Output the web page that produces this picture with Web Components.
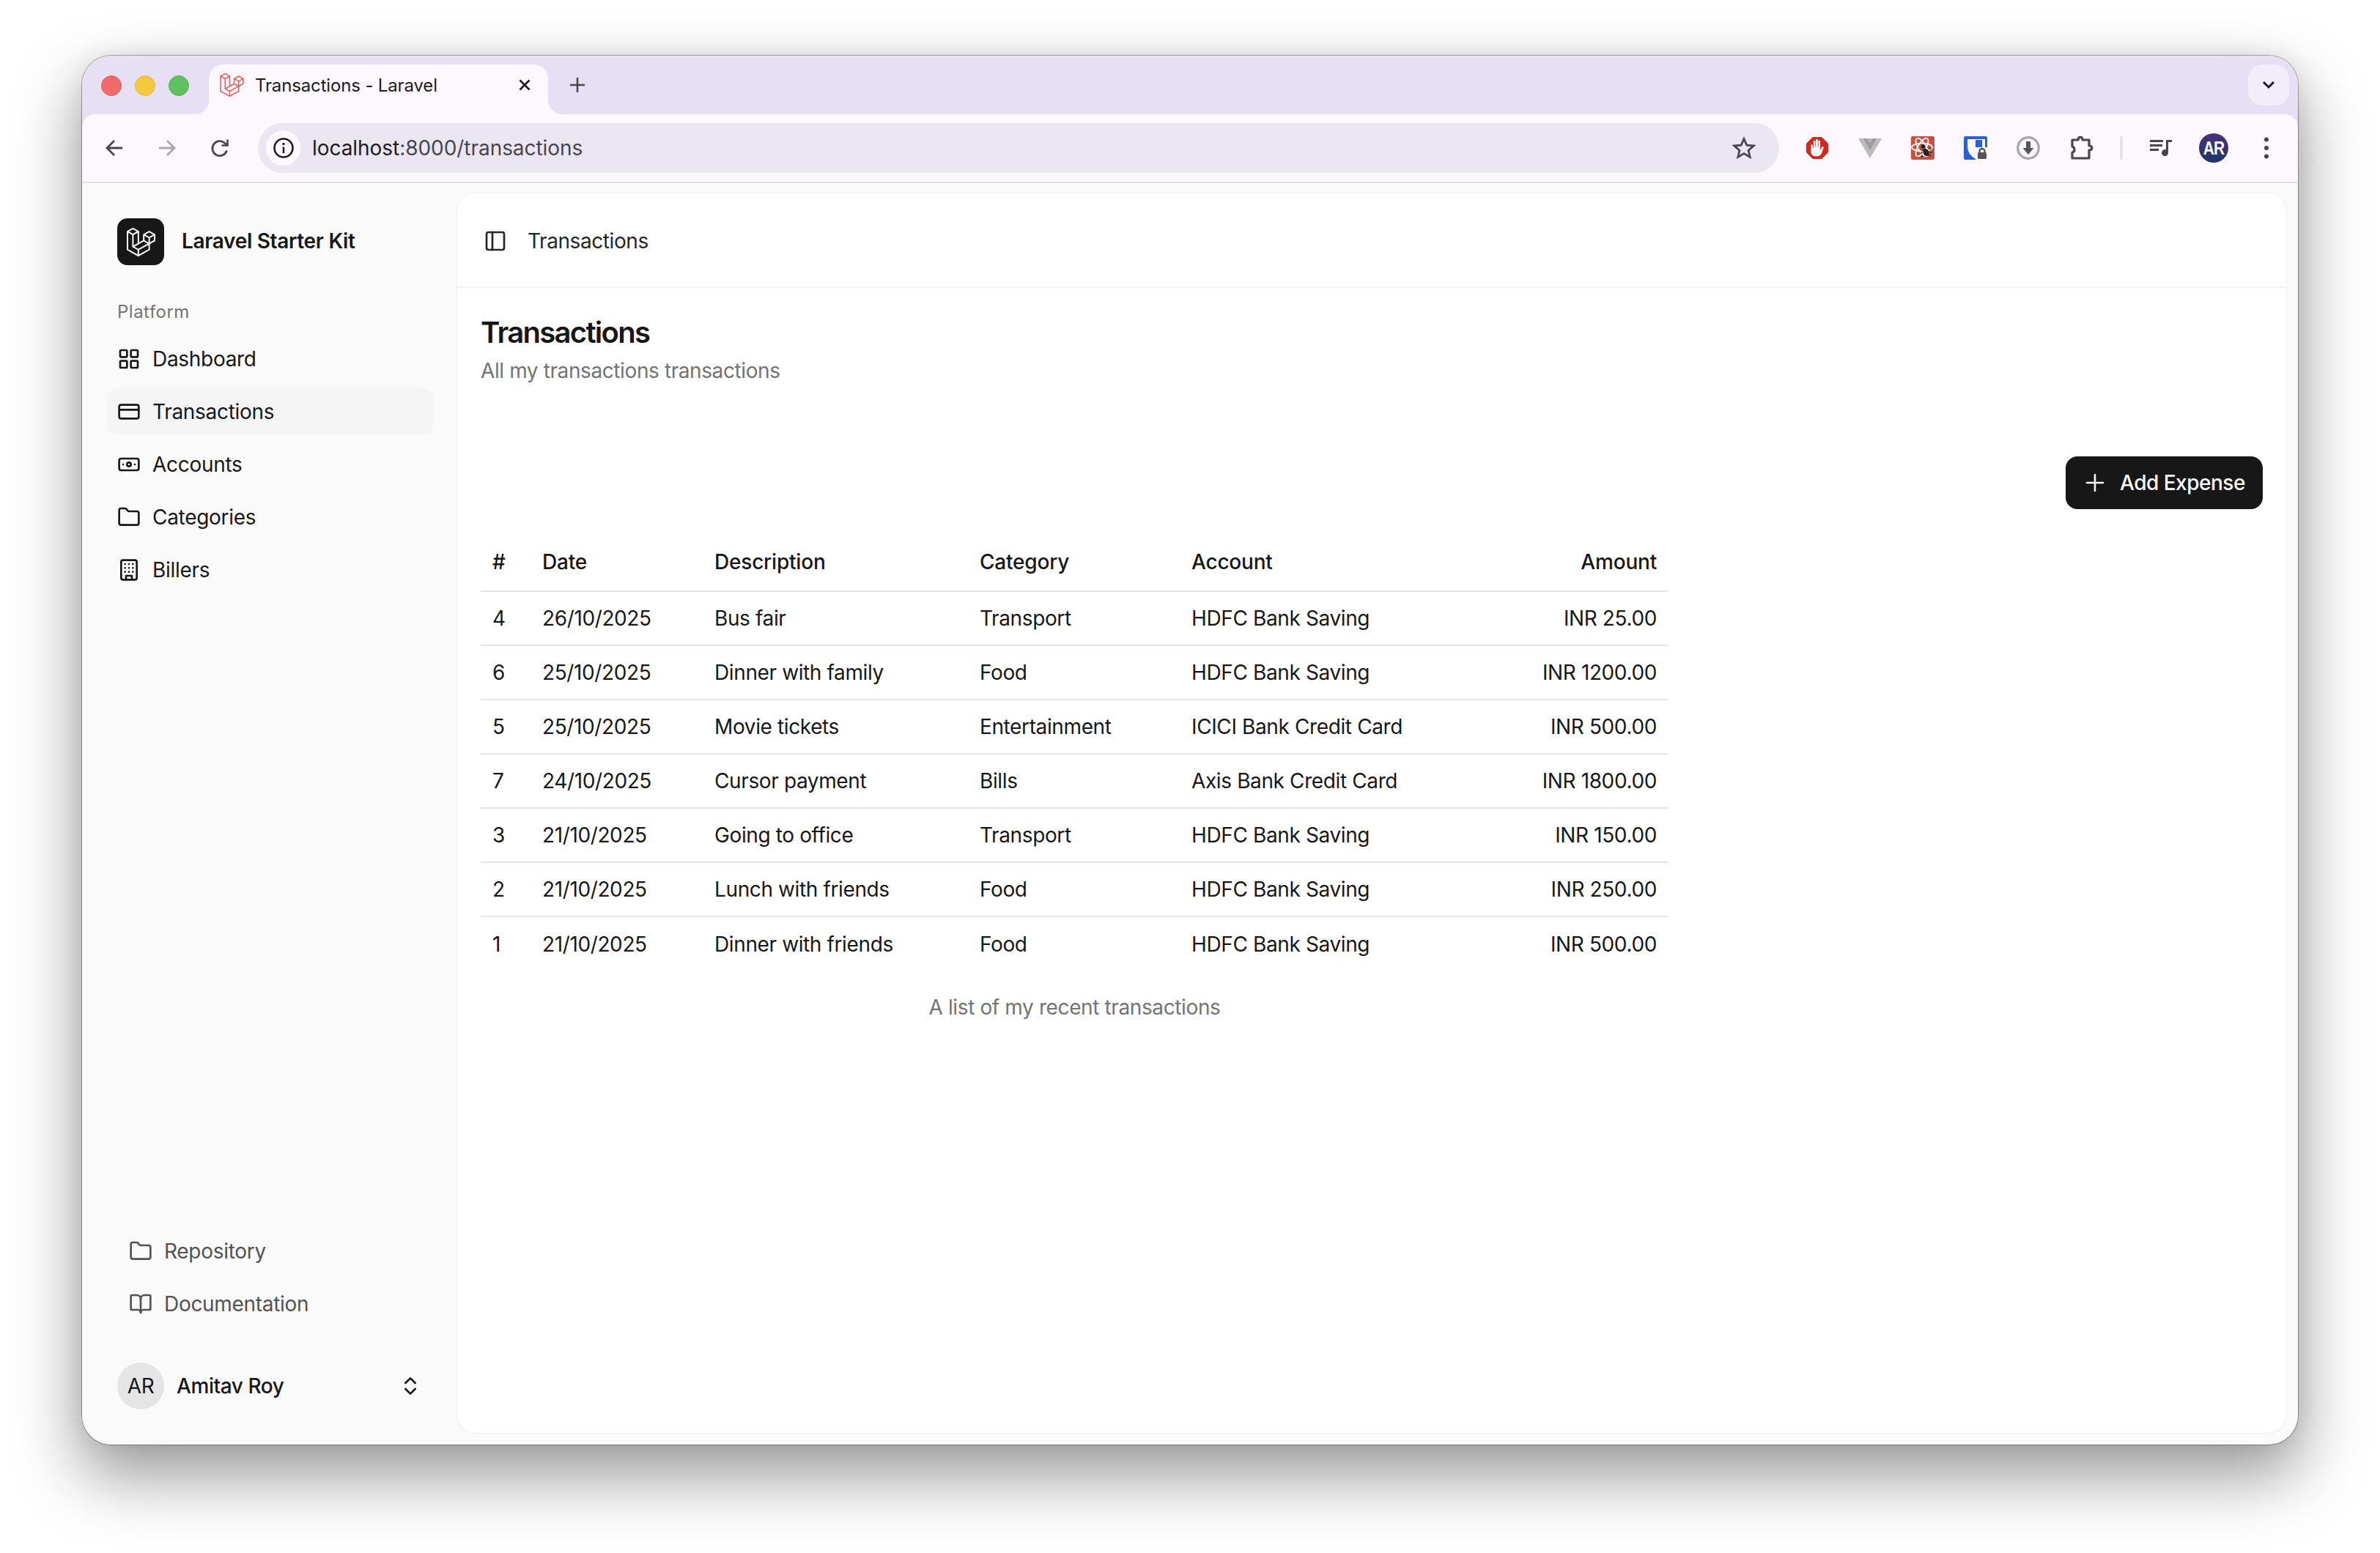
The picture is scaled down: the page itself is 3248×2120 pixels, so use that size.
<!doctype html>
<html lang="en"><head><meta charset="utf-8"><title>Transactions - Laravel</title>
<style>
html,body{margin:0;height:100%;background:#fff}
body{font-family:Inter,"Noto Sans",sans-serif;color:#171717}
</style></head>
<body>
<app-window>
  <tab-strip slot="strip"></tab-strip>
  <browser-toolbar slot="toolbar"></browser-toolbar>
  <app-sidebar slot="sidebar">
    <nav-item icon="grid" slot="nav">Dashboard</nav-item>
    <nav-item icon="card" active slot="nav">Transactions</nav-item>
    <nav-item icon="note" slot="nav">Accounts</nav-item>
    <nav-item icon="folder" slot="nav">Categories</nav-item>
    <nav-item icon="building" slot="nav">Billers</nav-item>
    <nav-item icon="folder" muted slot="foot">Repository</nav-item>
    <nav-item icon="book" muted slot="foot">Documentation</nav-item>
  </app-sidebar>
  <main-card slot="main">
    <tx-table></tx-table>
  </main-card>
</app-window>
<script>
const LOGO='M17.2 5.633 8.6.855 0 5.633v26.51l16.2 9 16.2-9v-8.442l7.6-4.223V9.856l-8.6-4.777-8.6 4.777V18.3l-5.6 3.111V5.633ZM38 18.301l-5.6 3.11v-6.157l5.6-3.11V18.3Zm-1.06-7.856-5.54 3.078-5.54-3.079 5.54-3.078 5.54 3.079ZM24.8 18.3v-6.157l5.6 3.111v6.158L24.8 18.3Zm-1 1.732 5.54 3.078-13.14 7.302-5.54-3.078 13.14-7.3v-.002Zm-16.2 7.89 7.6 4.222V38.3L2 30.966V7.92l5.6 3.111v16.892ZM8.6 9.3 3.06 6.222 8.6 3.143l5.54 3.08L8.6 9.3Zm21.8 15.51-13.2 7.334V38.3l13.2-7.334v-6.156ZM9.6 11.034l5.6-3.11v14.6l-5.6 3.11v-14.6Z';
const ICONS={
 grid:'<rect width="7" height="7" x="3" y="3" rx="1"/><rect width="7" height="7" x="14" y="3" rx="1"/><rect width="7" height="7" x="14" y="14" rx="1"/><rect width="7" height="7" x="3" y="14" rx="1"/>',
 card:'<rect width="20" height="14" x="2" y="5" rx="2"/><line x1="2" x2="22" y1="10" y2="10"/>',
 note:'<rect width="20" height="12" x="2" y="6" rx="2"/><circle cx="12" cy="12" r="2"/><path d="M6 12h.01M18 12h.01"/>',
 folder:'<path d="M20 20a2 2 0 0 0 2-2V8a2 2 0 0 0-2-2h-7.9a2 2 0 0 1-1.69-.9L9.6 3.9A2 2 0 0 0 7.93 3H4a2 2 0 0 0-2 2v13a2 2 0 0 0 2 2Z"/>',
 building:'<rect width="16" height="20" x="4" y="2" rx="2"/><path d="M9 22v-4h6v4"/><path d="M8 6h.01M16 6h.01M12 6h.01M12 10h.01M12 14h.01M16 10h.01M16 14h.01M8 10h.01M8 14h.01"/>',
 book:'<path d="M12 7v14"/><path d="M3 18a1 1 0 0 1-1-1V4a1 1 0 0 1 1-1h5a4 4 0 0 1 4 4 4 4 0 0 1 4-4h5a1 1 0 0 1 1 1v13a1 1 0 0 1-1 1h-6a3 3 0 0 0-3 3 3 3 0 0 0-3-3z"/>',
 panel:'<rect width="18" height="18" x="3" y="3" rx="2"/><path d="M9 3v18"/>',
 updown:'<path d="m7 15 5 5 5-5"/><path d="m7 9 5-5 5 5"/>',
 plus:'<path d="M5 12h14"/><path d="M12 5v14"/>'
};
const svg=(n,s,w=2)=>`<svg width="${s}" height="${s}" viewBox="0 0 24 24" fill="none" stroke="currentColor" stroke-width="${w}" stroke-linecap="round" stroke-linejoin="round" aria-hidden="true">${ICONS[n]}</svg>`;
function def(name,html){
  customElements.define(name,class extends HTMLElement{
    constructor(){super();this.attachShadow({mode:'open'}).innerHTML=typeof html==='function'?html(this):html;}
  });
}
def('app-window',`<style>
:host{display:flex;box-sizing:border-box;width:3248px;height:2120px;padding:76px 112px 148px}
.w{flex:1;display:flex;flex-direction:column;border-radius:40px;overflow:hidden;background:#fafafa;box-shadow:0 0 0 1px rgba(0,0,0,.3),0 40px 90px 4px rgba(0,0,0,.4),0 0 30px rgba(0,0,0,.08)}
.b{flex:1;display:flex;min-height:0}
</style><div class="w"><slot name="strip"></slot><slot name="toolbar"></slot><div class="b"><slot name="sidebar"></slot><slot name="main"></slot></div></div>`);

def('tab-strip',`<style>
:host{display:flex;height:80px;background:#e7dff3;flex:none;box-sizing:border-box;padding-left:26px;font-family:Inter,sans-serif}
.lights{display:flex;gap:18px;align-items:center;height:82px}
.l{width:28px;height:28px;border-radius:50%;box-sizing:border-box}
.tab{position:relative;margin:12px 0 0 27px;width:463px;height:68px;box-sizing:border-box;background:#fdf8ff;border-radius:20px 20px 0 0;display:flex;align-items:center;padding:0 0 12px 15px;color:#1d1b20;font-size:24px;white-space:nowrap}
.tab::before,.tab::after{content:"";position:absolute;bottom:0;width:20px;height:20px}
.tab::before{left:-20px;background:radial-gradient(circle at 0 0,transparent 20px,#fdf8ff 20.5px)}
.tab::after{right:-20px;background:radial-gradient(circle at 100% 0,transparent 20px,#fdf8ff 20.5px)}
.tab svg.f{flex:none;margin-right:15px}
.tt{flex:1;letter-spacing:-.15px}
.x{flex:none;margin-right:22px;display:flex}
.new{width:80px;height:80px;display:flex;align-items:center;justify-content:center;color:#49454f}
.more{margin:12px 12px 0 auto;width:56px;height:56px;border-radius:20px;background:#f3edfb;display:flex;align-items:center;justify-content:center}
</style>
<div class="lights"><div class="l" style="background:#f06a6b;border:1px solid #dc5a5b"></div><div class="l" style="background:#f5c93f;border:1px solid #e3b93a"></div><div class="l" style="background:#60c161;border:1px solid #52ad53"></div></div>
<div class="tab"><svg class="f" width="33" height="34" viewBox="0 0 40 42"><path fill="#ee5f5b" fill-rule="evenodd" d="${LOGO}"/></svg><span class="tt">Transactions - Laravel</span>
<span class="x"><svg width="20" height="20" viewBox="0 0 20 20" stroke="#1d1b20" stroke-width="2.6" fill="none"><path d="M3.5 3.5l13 13M16.5 3.5l-13 13"/></svg></span></div>
<div class="new"><svg width="24" height="24" viewBox="0 0 24 24" stroke="#49454f" stroke-width="2.6" fill="none"><path d="M12 2v20M2 12h20"/></svg></div>
<div class="more"><svg width="20" height="14" viewBox="0 0 20 14" fill="none" stroke="#1d1b20" stroke-width="3"><path d="M3 3l7 7 7-7"/></svg></div>`);

def('browser-toolbar',`<style>
:host{display:flex;align-items:center;flex:none;height:94px;box-sizing:border-box;background:#e7dff3;font-family:Inter,sans-serif}
.t{flex:1;height:94px;box-sizing:border-box;display:flex;align-items:center;background:#fdf8ff;border-radius:18px 18px 0 0;border-bottom:2px solid #e6e0ec;padding:0 7px 0 8px}
.i{flex:none;width:72px;height:72px;display:flex;align-items:center;justify-content:center;color:#49454f}
.o{flex:1;height:68px;margin:0 16px;border-radius:34px;background:#ebe7f2;display:flex;align-items:center;padding-left:11px;font-size:28px;color:#49454f}
.o .c{width:47px;height:48px;border-radius:50%;background:#fdf8ff;display:flex;align-items:center;justify-content:center;margin-right:16px;flex:none}
.o b{font-weight:400;color:#1d1b20}
.u{flex:1;letter-spacing:-.05px}
.star{margin-right:32px;display:flex}
.sep{flex:none;width:37px;display:flex;justify-content:flex-start}
.sep i{display:block;width:4px;height:32px;margin-left:17px;background:#e6e0f5;border-radius:2px}
.av{width:40px;height:40px;border-radius:50%;background:linear-gradient(180deg,#4b2f7e,#1c3768);display:flex;align-items:center;justify-content:center}
.av span{display:inline-block;color:#fff;font:700 25px/40px "Liberation Sans",Arial,sans-serif;letter-spacing:-1px;transform:scaleX(.84)}
</style>
<div class="t">
<div class="i"><svg width="26" height="26" viewBox="0 0 26 26" fill="none" stroke="#49454f" stroke-width="2.8"><path d="M24 13H3M13 3 3 13l10 10"/></svg></div>
<div class="i"><svg width="26" height="26" viewBox="0 0 26 26" fill="none" stroke="#a9a6ae" stroke-width="2.8"><path d="M2 13h21M13 3l10 10-10 10"/></svg></div>
<div class="i"><svg width="26" height="28" viewBox="0 0 26 28" fill="none" stroke="#49454f" stroke-width="2.8"><path d="M22.5 17.5a10 10 0 1 1-2.8-10.2L23 10"/><path d="M23.5 2.500V10.500H15.500" stroke-width="2.6"/></svg></div>
<div class="o"><div class="c"><svg width="30" height="30" viewBox="0 0 30 30" fill="none" stroke="#1d1b20" stroke-width="2.6"><circle cx="15" cy="15" r="12.500"/><path d="M15 13.500V22"/><path d="M15 8v3" stroke-width="3"/></svg></div>
<span class="u"><b>localhost</b>:8000/transactions</span>
<span class="star"><svg width="32" height="32" viewBox="0 0 32 32" fill="none" stroke="#49454f" stroke-width="2.8"><path d="M16 3.500l3.800 8.600 9.400.9-7.100 6.200 2.100 9.200L16 23.600l-8.200 4.800 2.100-9.200-7.100-6.200 9.400-.9z"/></svg></span></div>
<div class="i"><svg width="32" height="32" viewBox="0 0 34 34"><path fill="#d3291d" d="M10.500 1h13L33 10.500v13L23.500 33h-13L1 23.500v-13z"/><path fill="#fff" d="M8 13.500c0-1.700 2.600-1.700 2.600 0v3.200h.9V7.700c0-1.800 2.700-1.800 2.700 0v8h.8V5.500c0-1.900 2.800-1.900 2.800 0v10.200h.8V7.500c0-1.800 2.700-1.800 2.700 0V19l.7.400 1.400-3.500c.8-2 3.300-1.100 2.700.9l-2.400 7.200c-.9 3-3.200 5-6.800 5h-2.100C10 29 8 26 8 22.500z"/></svg></div>
<div class="i"><svg width="32" height="27" viewBox="0 0 32 27"><path fill="#bbbbbb" d="M0 0h6.500L16 16.500 25.500 0H32L16 27z"/><path fill="#9c9c9c" d="M6.500 0h6L16 6l3.500-6h6L16 16.500z"/><path fill="#b5b5b5" d="M12.500 0h7L16 6z"/></svg></div>
<div class="i"><svg width="32" height="32" viewBox="0 0 32 32"><rect width="32" height="32" rx="2" fill="#c9503f"/><g fill="none" stroke="#fff" stroke-width="1.700"><ellipse cx="15" cy="15" rx="14" ry="5.500"/><ellipse cx="15" cy="15" rx="14" ry="5.500" transform="rotate(60 15 15)"/><ellipse cx="15" cy="15" rx="14" ry="5.500" transform="rotate(120 15 15)"/></g><g stroke="#222" stroke-width="1.300"><path d="M16 20l-2-1M24 25l3 2M16 26l-2 2.500M25 18l2.500-2M15.500 23h-2.500M25.500 22h3"/></g><circle cx="16.500" cy="14" r="2.700" fill="#222"/><ellipse cx="20.500" cy="22" rx="3.800" ry="5.500" fill="#222" transform="rotate(-30 20.500 22)"/></svg></div>
<div class="i"><svg width="32" height="32" viewBox="0 0 32 32"><rect width="32" height="32" rx="2" fill="#2a60d8"/><path fill="#fdf8ff" d="M5 4h24v28H18C10 28 5 22 5 14z"/><path fill="#2a60d8" d="M16 5h9v20h-9z"/><path fill="#fdf8ff" d="M16 15h16v17H16z"/><path fill="none" stroke="#555" stroke-width="2.400" d="M21.500 23v-2.500a3.500 3.500 0 0 1 7 0V23"/><rect x="19" y="22" width="12" height="9" rx="1.500" fill="#555"/></svg></div>
<div class="i"><svg width="32" height="32" viewBox="0 0 32 32"><circle cx="16" cy="16" r="14.300" fill="none" stroke="#a6a6a8" stroke-width="3.200"/><path fill="#555" d="M13 7h6v9h4.500L16 25 8.500 16H13z"/></svg></div>
<div class="i"><svg width="34" height="34" viewBox="0 0 34 34" fill="none" stroke="#49454f" stroke-width="3.200" stroke-linejoin="round"><path d="M5 6h8c0-5 6-5 6 0h9v8c5 0 5 6 0 6v11H5v-8c4-.5 4-7 0-8z"/></svg></div>
<div class="sep"><i></i></div>
<div class="i"><svg width="30" height="22" viewBox="0 0 30 22" fill="#49454f"><path d="M0 0h18v3H0zM0 6h17v3H0zM0 12h12v3H0z"/><path d="M22 0h8v3h-5v14.500a4.500 4.500 0 1 1-3-4.200z"/></svg></div>
<div class="i"><div class="av"><span>AR</span></div></div>
<div class="i"><svg width="8" height="30" viewBox="0 0 8 30" fill="#49454f"><circle cx="4" cy="3.500" r="3"/><circle cx="4" cy="15" r="3"/><circle cx="4" cy="26.500" r="3"/></svg></div>
</div>`);

def('nav-item',h=>`<style>
:host{display:flex;height:64px;align-items:center;box-sizing:border-box;padding-left:15px;gap:16px;border-radius:16px;font-size:28px;letter-spacing:-.3px;font-weight:400;color:${h.hasAttribute('muted')?'#525252':'#171717'};${h.hasAttribute('active')?'background:#f5f5f5;':''}}
svg{flex:none;display:block}
</style>${svg(h.getAttribute('icon'),32)}<slot></slot>`);

def('app-sidebar',`<style>
:host{display:flex;flex-direction:column;width:512px;flex:none;box-sizing:border-box;padding:48px 0 48px 33px;background:#fafafa}
.wrap{display:flex;flex-direction:column;width:447px;flex:1}
.brand{display:flex;align-items:center;height:64px;padding-left:15px;gap:24px;font-size:28px;font-weight:600;letter-spacing:-.32px}
.brand span{margin-bottom:3px}
.logo{width:64px;height:64px;border-radius:14px;background:#171717;display:flex;align-items:center;justify-content:center}
.lab{margin:48px 0 16px 15px;height:32px;line-height:32px;font-size:24px;color:#737373;letter-spacing:.5px}
.nav{display:flex;flex-direction:column;gap:8px}
.foot{margin-top:auto;display:flex;flex-direction:column;gap:8px;padding-left:16px}
.user{margin-top:48px;height:64px;display:flex;align-items:center;padding-left:15px;font-size:28px;font-weight:500;letter-spacing:-.42px}
.a{width:64px;height:64px;border-radius:50%;background:#e5e5e5;display:flex;align-items:center;justify-content:center;font-weight:400;margin-right:17px;letter-spacing:-.4px}
.n{flex:1}
.c{margin-right:16px;display:flex}
</style><div class="wrap">
<div class="brand"><div class="logo"><svg width="39" height="41" viewBox="0 0 40 42"><path fill="#fff" fill-rule="evenodd" d="${LOGO}"/></svg></div><span>Laravel Starter Kit</span></div>
<div class="lab">Platform</div>
<div class="nav"><slot name="nav"></slot></div>
<div class="foot"><slot name="foot"></slot></div>
<div class="user"><div class="a">AR</div><span class="n">Amitav Roy</span><span class="c">${svg('updown',32)}</span></div>
</div>`);

def('main-card',`<style>
:host{flex:1;display:flex;flex-direction:column;min-width:0;margin:14px 16px 16px 0;background:#fff;border-radius:24px;box-shadow:0 0 0 1px #eeeeee;overflow:hidden}
header{display:flex;align-items:center;height:129px;flex:none;box-sizing:border-box;border-bottom:2px solid #f3f3f3;padding:2px 0 0 36px;gap:28px;font-size:28px;letter-spacing:-.42px;color:#262626}
.c{padding:31px 32px 0 32px;display:flex;flex-direction:column}
h1{margin:0;font-size:40px;line-height:60px;font-weight:600;letter-spacing:-1.7px;color:#171717}
p{margin:0;font-size:28px;line-height:44px;color:#737373;letter-spacing:-.4px}
.bar{display:flex;justify-content:flex-end;margin-top:95px}
.btn{height:72px;box-sizing:border-box;width:269px;background:#171717;color:#fff;border-radius:16px;display:flex;align-items:center;padding-left:21px;gap:15px;font-size:28px;font-weight:500;letter-spacing:-.5px}
.tw{margin-top:38px}
</style>
<header>${svg('panel',32)}<span>Transactions</span></header>
<div class="c"><h1>Transactions</h1><p>All my transactions transactions</p>
<div class="bar"><div class="btn">${svg('plus',38,1.6)}<span>Add Expense</span></div></div>
<div class="tw"><slot></slot></div></div>`);

const ROWS=[['4','26/10/2025','Bus fair','Transport','HDFC Bank Saving','INR 25.00'],['6','25/10/2025','Dinner with family','Food','HDFC Bank Saving','INR 1200.00'],['5','25/10/2025','Movie tickets','Entertainment','ICICI Bank Credit Card','INR 500.00'],['7','24/10/2025','Cursor payment','Bills','Axis Bank Credit Card','INR 1800.00'],['3','21/10/2025','Going to office','Transport','HDFC Bank Saving','INR 150.00'],['2','21/10/2025','Lunch with friends','Food','HDFC Bank Saving','INR 250.00'],['1','21/10/2025','Dinner with friends','Food','HDFC Bank Saving','INR 500.00']];
def('tx-table',`<style>
:host{display:block;width:1621px;font-size:28px;letter-spacing:-.38px;color:#171717}
table{border-collapse:collapse;width:1621px;table-layout:fixed}
th,td{padding:0 16px;height:74px;box-sizing:border-box;text-align:left;font-weight:400;border-bottom:2px solid #e5e5e5;white-space:nowrap}
th{font-weight:500;padding-bottom:6px;letter-spacing:-.2px}
tbody tr:last-child td{border-bottom:0}
.r{text-align:right}
caption{caption-side:bottom;padding-top:28px;color:#737373;line-height:44px}
</style><table><colgroup><col style="width:68px"><col style="width:235px"><col style="width:362px"><col style="width:289px"><col style="width:419px"><col style="width:248px"></colgroup>
<caption>A list of my recent transactions</caption>
<thead><tr><th>#</th><th>Date</th><th>Description</th><th>Category</th><th>Account</th><th class="r">Amount</th></tr></thead>
<tbody>${ROWS.map(r=>`<tr>${r.map((c,i)=>`<td${i==5?' class="r"':''}>${c}</td>`).join('')}</tr>`).join('')}</tbody></table>`);
</script>
</body></html>
